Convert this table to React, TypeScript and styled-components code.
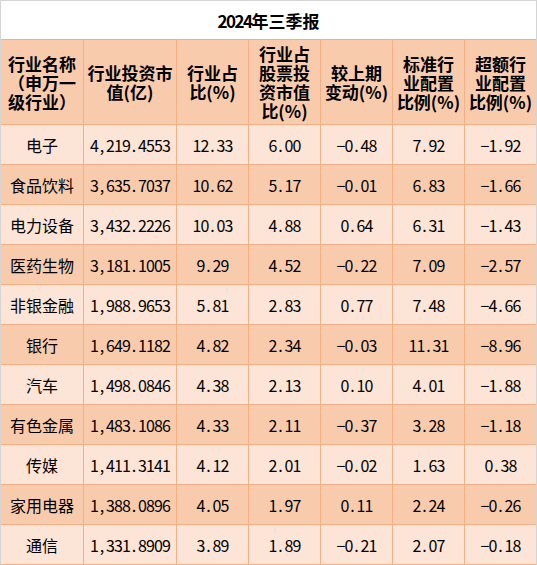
import React from "react";
import styled, { createGlobalStyle } from "styled-components";

const GlobalStyle = createGlobalStyle`
  html, body { margin: 0; padding: 0; background: #ffffff; }
  body { font-family: "Noto Sans CJK SC", "Liberation Sans", sans-serif; }
`;

const LINE = "#F4B084";
const DARK = "#F8CBAD";
const LIGHT = "#FCE4D6";

const Sheet = styled.div`
  box-sizing: border-box;
  width: 537px;
  display: grid;
  grid-template-columns: 82px 92px repeat(5, 71px);
  gap: 1px;
  background: ${LINE};
  border-top: 1px solid #d4d4d4;
  border-left: 1px solid #d4d4d4;
  border-right: 1px solid #d4d4d4;
  border-bottom: 1px solid ${LINE};
  color: #000;
`;

const Title = styled.div`
  grid-column: 1 / -1;
  height: 38px;
  background: #ffffff;
  display: flex;
  align-items: center;
  justify-content: center;
  font-weight: 700;
  font-size: 17px;
`;

const HeadCell = styled.div`
  height: 84px;
  background: ${DARK};
  display: flex;
  flex-direction: column;
  align-items: center;
  justify-content: center;
  text-align: center;
  font-weight: 700;
  font-size: 17px;
  line-height: 19px;
  white-space: nowrap;
`;

const HeadLine = styled.div`
  height: 19px;
`;

const Cell = styled.div<{ $alt: boolean }>`
  height: 39px;
  background: ${(p) => (p.$alt ? DARK : LIGHT)};
  display: flex;
  align-items: center;
  justify-content: center;
  font-size: 16px;
  white-space: nowrap;
`;

/* half-width box: emulates the monospace half-width digits of a CJK font */
const Half = styled.span`
  display: inline-block;
  width: 0.5em;
  text-align: center;
`;

function Txt({ s }: { s: string }) {
  return (
    <>
      {Array.from(s).map((ch, i) =>
        /[0-9,.\-]/.test(ch) ? (
          <Half key={i}>{ch === "-" ? "\u2212" : ch}</Half>
        ) : (
          <span key={i}>{ch}</span>
        )
      )}
    </>
  );
}

const headers: string[][] = [
  ["行业名称", "（申万一", "级行业）"],
  ["行业投资市", "值(亿)"],
  ["行业占", "比(%)"],
  ["行业占", "股票投", "资市值", "比(%)"],
  ["较上期", "变动(%)"],
  ["标准行", "业配置", "比例(%)"],
  ["超额行", "业配置", "比例(%)"],
];

const rows: string[][] = [
  ["电子", "4,219.4553", "12.33", "6.00", "-0.48", "7.92", "-1.92"],
  ["食品饮料", "3,635.7037", "10.62", "5.17", "-0.01", "6.83", "-1.66"],
  ["电力设备", "3,432.2226", "10.03", "4.88", "0.64", "6.31", "-1.43"],
  ["医药生物", "3,181.1005", "9.29", "4.52", "-0.22", "7.09", "-2.57"],
  ["非银金融", "1,988.9653", "5.81", "2.83", "0.77", "7.48", "-4.66"],
  ["银行", "1,649.1182", "4.82", "2.34", "-0.03", "11.31", "-8.96"],
  ["汽车", "1,498.0846", "4.38", "2.13", "0.10", "4.01", "-1.88"],
  ["有色金属", "1,483.1086", "4.33", "2.11", "-0.37", "3.28", "-1.18"],
  ["传媒", "1,411.3141", "4.12", "2.01", "-0.02", "1.63", "0.38"],
  ["家用电器", "1,388.0896", "4.05", "1.97", "0.11", "2.24", "-0.26"],
  ["通信", "1,331.8909", "3.89", "1.89", "-0.21", "2.07", "-0.18"],
];

export default function App() {
  return (
    <>
      <GlobalStyle />
      <Sheet>
        <Title>
          <Txt s="2024年三季报" />
        </Title>
        {headers.map((lines, i) => (
          <HeadCell key={`h${i}`}>
            {lines.map((l, j) => (
              <HeadLine key={j}>{l}</HeadLine>
            ))}
          </HeadCell>
        ))}
        {rows.map((r, ri) =>
          r.map((v, ci) => (
            <Cell key={`${ri}-${ci}`} $alt={ri % 2 === 1}>
              <Txt s={v} />
            </Cell>
          ))
        )}
      </Sheet>
    </>
  );
}
